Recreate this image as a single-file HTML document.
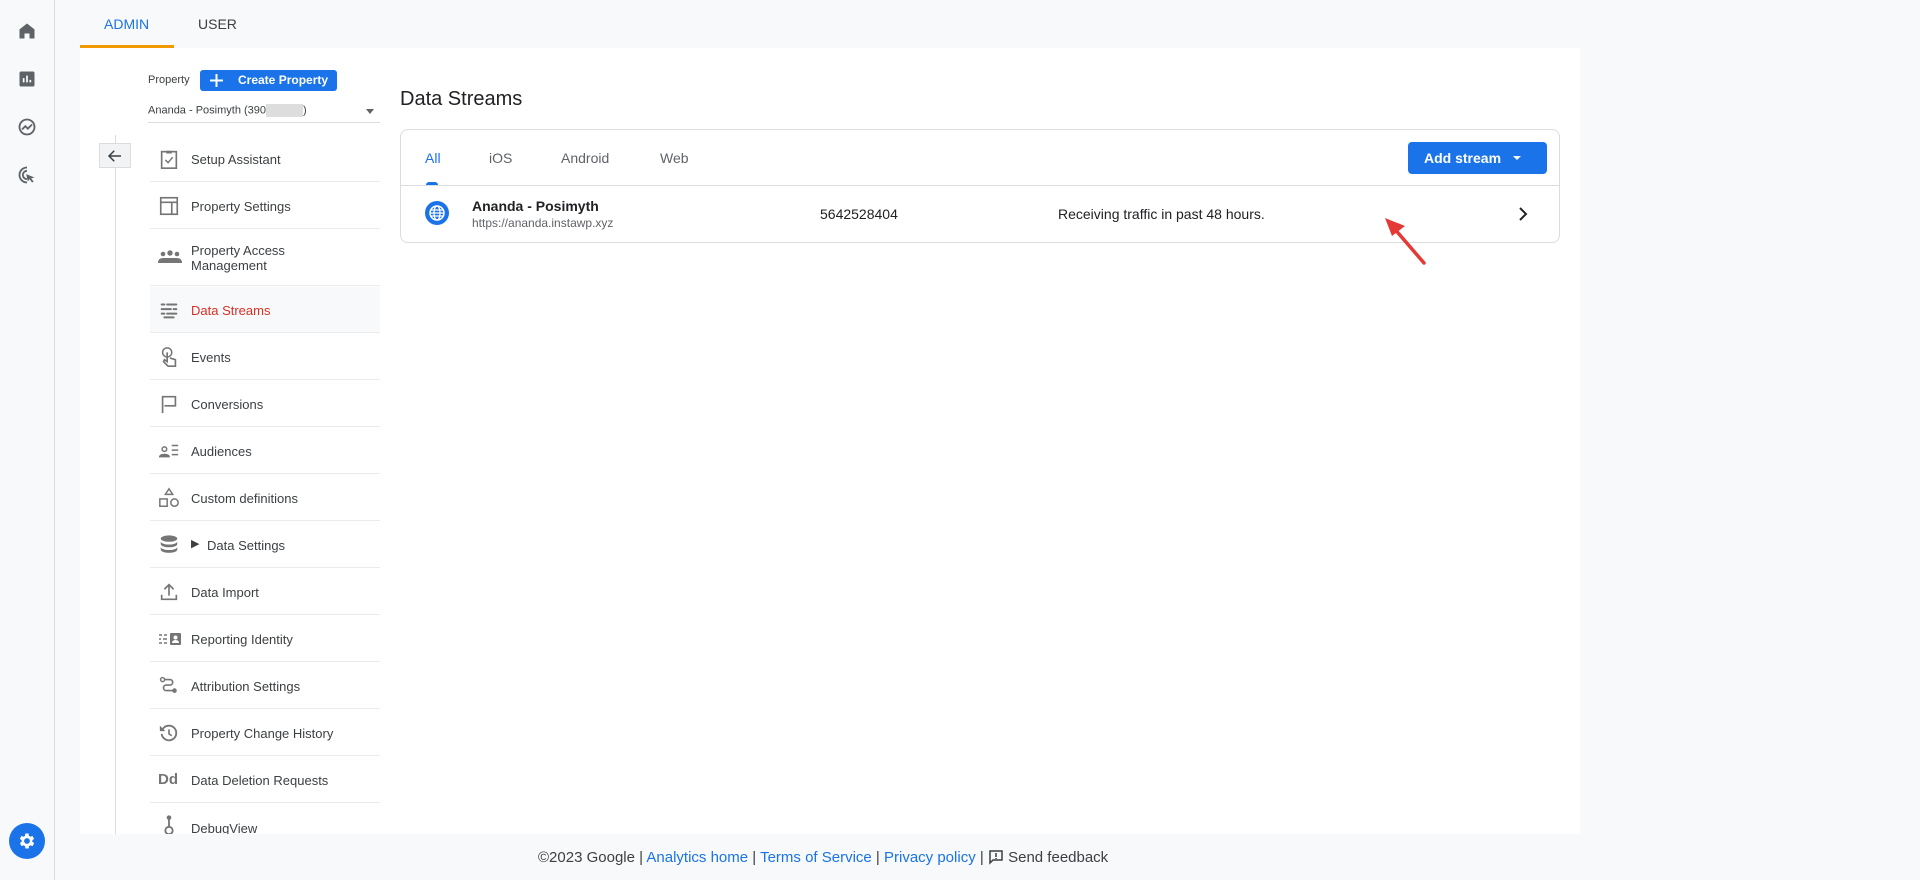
<!DOCTYPE html>
<html><head><meta charset="utf-8"><style>
*{margin:0;padding:0;box-sizing:border-box}
body{width:1920px;height:880px;background:#f8f9fa;font-family:"Liberation Sans",Arial,sans-serif;color:#3c4043;position:relative;overflow:hidden}
.a{position:absolute}
.rail{left:0;top:0;width:55px;height:880px;border-right:1px solid #dadce0;background:#f8f9fa}
.panel{left:80px;top:48px;width:1500px;height:786px;background:#fff}
.mi{position:absolute;left:150px;width:230px;border-bottom:1px solid #ebebeb;font-size:13px;color:#3c4043}
.mi span{position:absolute;left:41px}
.mi svg{position:absolute;left:8px}
.link{color:#1a73e8}
</style></head><body>
<div class="a rail"></div>
<svg class="a" style="left:17px;top:21px" width="20" height="20" viewBox="0 0 24 24"><path d="M12 3L3 10v11h6v-6h6v6h6V10z" fill="#5f6368"/></svg>
<svg class="a" style="left:17px;top:69px" width="20" height="20" viewBox="0 0 24 24"><rect x="3" y="3" width="18" height="18" rx="2" fill="#5f6368"/><path d="M8 16v-5M12 16V8M16 16v-3" stroke="#fff" stroke-width="2"/></svg>
<svg class="a" style="left:17px;top:117px" width="20" height="20" viewBox="0 0 24 24"><circle cx="12" cy="12" r="9" fill="none" stroke="#5f6368" stroke-width="2.2"/><path d="M6 15l4-4 3 3 5-5" fill="none" stroke="#5f6368" stroke-width="2.2"/></svg>
<svg class="a" style="left:17px;top:165px" width="20" height="20" viewBox="0 0 24 24"><path d="M12 3a9 9 0 1 0 0 18" fill="none" stroke="#5f6368" stroke-width="2.2"/><path d="M12 7a5 5 0 1 0 0 10" fill="none" stroke="#5f6368" stroke-width="2.2"/><path d="M11 11l10 4-4 1 3 4-2 1-3-4-2 3z" fill="#5f6368"/></svg>
<div class="a" style="left:9px;top:823px;width:36px;height:36px;border-radius:50%;background:#1a73e8"></div>
<svg class="a" style="left:17px;top:831px" width="20" height="20" viewBox="0 0 24 24"><path fill="#fff" d="M19.4 13a7.5 7.5 0 0 0 0-2l2.1-1.6-2-3.5-2.5 1a7 7 0 0 0-1.7-1L15 3h-4l-.4 2.9a7 7 0 0 0-1.7 1l-2.5-1-2 3.5L6.6 11a7.5 7.5 0 0 0 0 2l-2.1 1.6 2 3.5 2.5-1a7 7 0 0 0 1.7 1L11 21h4l.4-2.9a7 7 0 0 0 1.7-1l2.5 1 2-3.5zM13 15.5a3.5 3.5 0 1 1 0-7 3.5 3.5 0 0 1 0 7z" transform="translate(-1 0)"/></svg>

<div class="a" style="left:104px;top:16px;font-size:14px;color:#1a73e8">ADMIN</div>
<div class="a" style="left:198px;top:16px;font-size:14px;color:#3c4043">USER</div>
<div class="a" style="left:80px;top:45px;width:94px;height:3px;background:#f29900"></div>
<div class="a panel"></div>

<div class="a" style="left:148px;top:74px;font-size:11px;color:#3c4043">Property</div>
<div class="a" style="left:200px;top:70px;width:137px;height:21px;background:#1a73e8;border-radius:3px;color:#fff;font-size:12px;font-weight:bold;line-height:21px;padding-left:38px">Create Property</div>
<svg class="a" style="left:209px;top:73px" width="15" height="15" viewBox="0 0 15 15"><path d="M7.5 1v13M1 7.5h13" stroke="#fff" stroke-width="2"/></svg>
<div class="a" style="left:148px;top:104px;font-size:11px;color:#3c4043">Ananda - Posimyth (390<span style="display:inline-block;width:37px;height:13px;background:#ddd;vertical-align:middle"></span>)</div>
<div class="a" style="left:366px;top:109px;width:0;height:0;border-left:4px solid transparent;border-right:4px solid transparent;border-top:5px solid #5f6368"></div>
<div class="a" style="left:148px;top:122px;width:232px;height:1px;background:#dadce0"></div>

<div class="a" style="left:115px;top:135px;width:1px;height:699px;background:#dadce0"></div>
<div class="a" style="left:99px;top:143px;width:32px;height:25px;background:#f1f3f4;border:1px solid #dadce0"></div>
<svg class="a" style="left:106px;top:147px" width="18" height="18" viewBox="0 0 24 24"><path d="M20 12H5M11 5l-7 7 7 7" fill="none" stroke="#3c4043" stroke-width="2"/></svg>

<div class="a" style="left:150px;top:287px;width:230px;height:46px;background:#f8f9fa"></div>

<div class="mi" style="top:135px;height:47px"><svg style="top:13px" width="22" height="22" viewBox="0 0 24 24"><rect x="4" y="4" width="16" height="18" fill="none" stroke="#757575" stroke-width="1.8"/><path d="M9 3h6v3H9z" fill="#757575"/><path d="M8 13l3 3 5-6" fill="none" stroke="#757575" stroke-width="1.6"/></svg><span style="top:17px">Setup Assistant</span></div>
<div class="mi" style="top:182px;height:47px"><svg style="top:13px" width="22" height="22" viewBox="0 0 24 24"><rect x="3" y="3" width="18" height="18" fill="none" stroke="#757575" stroke-width="1.8"/><path d="M3 8h18M15 8v13" stroke="#757575" stroke-width="1.8"/></svg><span style="top:17px">Property Settings</span></div>
<div class="mi" style="top:229px;height:57px"><svg style="top:19px" width="24" height="20" viewBox="0 0 24 20"><circle cx="5" cy="6" r="2.3" fill="#757575"/><circle cx="12" cy="5" r="2.7" fill="#757575"/><circle cx="19" cy="6" r="2.3" fill="#757575"/><path d="M0 15q0-5 5-5t7 0 7 0 5 5z" fill="#757575"/></svg><span style="top:14px;line-height:15px">Property Access<br>Management</span></div>
<div class="mi" style="top:286px;height:47px"><svg style="top:13px" width="22" height="22" viewBox="0 0 24 24"><path d="M4 6h3M10 6h10M4 11h10M17 11h3M4 16h3M10 16h10M7 20h10" stroke="#757575" stroke-width="2.2" stroke-linecap="round"/></svg><span style="top:17px;color:#d93025">Data Streams</span></div>
<div class="mi" style="top:333px;height:47px"><svg style="top:12px" width="22" height="24" viewBox="0 0 24 24"><circle cx="10" cy="7" r="5" fill="none" stroke="#757575" stroke-width="1.6"/><path d="M10 7v10l-3-2-1 2 5 5h8v-7l-6-2" fill="none" stroke="#757575" stroke-width="1.8"/></svg><span style="top:17px">Events</span></div>
<div class="mi" style="top:380px;height:47px"><svg style="top:13px" width="22" height="22" viewBox="0 0 24 24"><path d="M5 22V4h14v10H7" fill="none" stroke="#757575" stroke-width="1.8"/></svg><span style="top:17px">Conversions</span></div>
<div class="mi" style="top:427px;height:47px"><svg style="top:13px" width="22" height="22" viewBox="0 0 24 24"><circle cx="7" cy="10" r="2.5" fill="none" stroke="#757575" stroke-width="1.6"/><path d="M1 19q0-4 6-4t6 4z" fill="#757575"/><path d="M15 6h7M15 11h7M15 16h7" stroke="#757575" stroke-width="1.6"/></svg><span style="top:17px">Audiences</span></div>
<div class="mi" style="top:474px;height:47px"><svg style="top:12px" width="22" height="24" viewBox="0 0 24 24"><path d="M12 2l4 6H8z" fill="none" stroke="#757575" stroke-width="1.6"/><rect x="2" y="13" width="8" height="8" fill="none" stroke="#757575" stroke-width="1.6"/><circle cx="18" cy="17" r="4" fill="none" stroke="#757575" stroke-width="1.6"/></svg><span style="top:17px">Custom definitions</span></div>
<div class="mi" style="top:521px;height:47px"><svg style="top:13px" width="22" height="22" viewBox="0 0 24 24"><ellipse cx="12" cy="5" rx="9" ry="3.5" fill="#757575"/><path d="M3 8v3c0 2 4 3.5 9 3.5s9-1.5 9-3.5V8c0 2-4 3.5-9 3.5S3 10 3 8zM3 14v3c0 2 4 3.5 9 3.5s9-1.5 9-3.5v-3c0 2-4 3.5-9 3.5S3 16 3 14z" fill="#757575"/></svg><span style="top:16px;left:41px;font-size:11px;color:#3c4043">&#9654;</span><span style="top:17px;left:57px">Data Settings</span></div>
<div class="mi" style="top:568px;height:47px"><svg style="top:13px" width="22" height="22" viewBox="0 0 24 24"><path d="M12 16V4M7 9l5-5 5 5M4 15v5h16v-5" fill="none" stroke="#757575" stroke-width="1.8"/></svg><span style="top:17px">Data Import</span></div>
<div class="mi" style="top:615px;height:47px"><svg style="top:13px" width="24" height="22" viewBox="0 0 24 22"><path d="M1 7h3M6 7h3M1 11h2M5 11h4M1 15h3M6 15h3" stroke="#757575" stroke-width="1.5"/><rect x="12" y="5" width="11" height="12" rx="1" fill="#757575"/><circle cx="17.5" cy="9.5" r="2" fill="#fff"/><path d="M14 15q0-3 3.5-3t3.5 3z" fill="#fff"/></svg><span style="top:17px">Reporting Identity</span></div>
<div class="mi" style="top:662px;height:47px"><svg style="top:13px" width="22" height="22" viewBox="0 0 24 24"><circle cx="5" cy="5" r="2.2" fill="none" stroke="#757575" stroke-width="1.6"/><path d="M7 5h6a3 3 0 0 1 0 6H9a3 3 0 0 0 0 6h8" fill="none" stroke="#757575" stroke-width="1.8"/><circle cx="18" cy="17" r="2.5" fill="#757575"/></svg><span style="top:17px">Attribution Settings</span></div>
<div class="mi" style="top:709px;height:47px"><svg style="top:13px" width="22" height="22" viewBox="0 0 24 24"><path d="M5 8a8 8 0 1 1-1 5" fill="none" stroke="#757575" stroke-width="2"/><path d="M2 4v6h6" fill="#757575"/><path d="M12 8v5l3 2" fill="none" stroke="#757575" stroke-width="1.8"/></svg><span style="top:17px">Property Change History</span></div>
<div class="mi" style="top:756px;height:47px"><span style="left:8px;top:15px;font-size:15px;font-weight:bold;color:#757575">Dd</span><span style="top:17px">Data Deletion Requests</span></div>
<div class="mi" style="top:803px;height:31px;border:none;overflow:hidden"><svg style="top:10px" width="22" height="24" viewBox="0 0 24 24"><circle cx="12" cy="4" r="2.5" fill="#757575"/><path d="M12 6v8" stroke="#757575" stroke-width="2"/><circle cx="12" cy="18" r="4" fill="none" stroke="#757575" stroke-width="2"/></svg><span style="top:18px">DebugView</span></div>

<div class="a" style="left:400px;top:88px;font-size:20px;color:#202124">Data Streams</div>
<div class="a" style="left:400px;top:129px;width:1160px;height:114px;border:1px solid #dadce0;border-radius:8px"></div>
<div class="a" style="left:400px;top:185px;width:1160px;height:1px;background:#dadce0"></div>
<div class="a" style="left:425px;top:150px;font-size:14px;color:#1a73e8">All</div>
<div class="a" style="left:489px;top:150px;font-size:14px;color:#5f6368">iOS</div>
<div class="a" style="left:561px;top:150px;font-size:14px;color:#5f6368">Android</div>
<div class="a" style="left:660px;top:150px;font-size:14px;color:#5f6368">Web</div>
<div class="a" style="left:426px;top:182px;width:12px;height:3px;background:#1a73e8;border-radius:3px 3px 0 0"></div>
<div class="a" style="left:1408px;top:142px;width:139px;height:32px;background:#1a73e8;border-radius:4px;color:#fff;font-size:14px;font-weight:bold;line-height:32px;padding-left:16px">Add stream</div>
<div class="a" style="left:1513px;top:156px;width:0;height:0;border-left:4px solid transparent;border-right:4px solid transparent;border-top:4px solid #fff"></div>

<svg class="a" style="left:425px;top:201px" width="24" height="24" viewBox="0 0 24 24"><circle cx="12" cy="12" r="12" fill="#1a73e8"/><circle cx="12" cy="12" r="7" fill="none" stroke="#fff" stroke-width="1.5"/><ellipse cx="12" cy="12" rx="3" ry="7" fill="none" stroke="#fff" stroke-width="1.3"/><path d="M5 12h14M6 9h12M6 15h12" stroke="#fff" stroke-width="1.2"/></svg>
<div class="a" style="left:472px;top:198px;font-size:14px;font-weight:bold;color:#202124">Ananda - Posimyth</div>
<div class="a" style="left:472px;top:216px;font-size:12px;color:#5f6368">https://ananda.instawp.xyz</div>
<div class="a" style="left:820px;top:206px;font-size:14px;color:#202124">5642528404</div>
<div class="a" style="left:1058px;top:206px;font-size:14px;color:#202124">Receiving traffic in past 48 hours.</div>
<svg class="a" style="left:1515px;top:206px" width="16" height="16" viewBox="0 0 16 16"><path d="M5 2l6 6-6 6" fill="none" stroke="#202124" stroke-width="2"/></svg>
<svg class="a" style="left:1375px;top:210px" width="60" height="60" viewBox="0 0 60 60"><path d="M49 53L18 17" stroke="#e53935" stroke-width="3.5" stroke-linecap="round"/><path d="M10 8l20 8-13 10z" fill="#e53935"/></svg>

<div class="a" style="left:538px;top:849px;font-size:15px;color:#3c4043;white-space:nowrap">©2023 Google | <span class="link">Analytics home</span> | <span class="link">Terms of Service</span> | <span class="link">Privacy policy</span> | <svg width="16" height="16" viewBox="0 0 16 16" style="vertical-align:-3px"><path d="M2 2h12v9H5l-3 3z" fill="none" stroke="#3c4043" stroke-width="1.5"/><path d="M8 4v4M8 9v1" stroke="#3c4043" stroke-width="1.5"/></svg> Send feedback</div>
</body></html>
